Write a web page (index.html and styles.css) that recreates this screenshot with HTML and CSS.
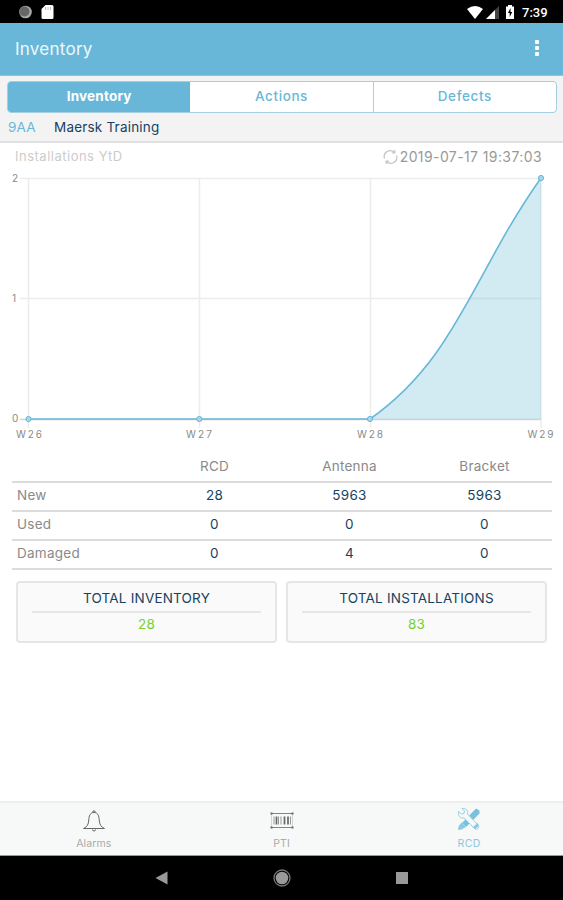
FILE: index.html
```html
<!DOCTYPE html>
<html lang="en">
<head>
    <meta charset="UTF-8">
    <meta name="viewport" content="width=device-width, initial-scale=1.0">
    <title>Inventory</title>
    <link rel="stylesheet" href="styles.css">
</head>
<body>
    <!-- Status bar -->
    <div class="status-bar">
        <svg class="status-left" width="40" height="18" viewBox="0 0 40 18">
            <circle cx="7.5" cy="9" r="6.3" fill="#aaa"/>
            <circle cx="6.5" cy="8.5" r="5" fill="#666"/>
            <path d="M27.5 2h6.5q1.5 0 1.5 1.5v11q0 1.5-1.5 1.5h-9q-1.5 0-1.5-1.5V6z" fill="#fff"/>
            <path d="M27.5 4v3M30 4v3M32.5 4v3" stroke="#bbb" stroke-width="1"/>
        </svg>
        <svg class="status-right" width="50" height="18" viewBox="0 0 50 18">
            <path d="M0 6Q8 0 16 6L8 16z" fill="#fff"/>
            <path d="M32 3v13H19z" fill="#444"/>
            <path d="M28 7v9h-9z" fill="#fff"/>
            <path d="M41 2h4v1.5h2V16h-8V3.5h2z" fill="#fff"/>
            <path d="M43.500 5l-2.500 5h1.700v4l2.500-5h-1.700z" fill="#000"/>
        </svg>
        <span class="clock">7:39</span>
    </div>

    <header class="app-bar">
        <h1>Inventory</h1>
        <div class="menu"><i></i><i></i><i></i></div>
    </header>

    <section class="top">
        <div class="tabs">
            <div class="tab active">Inventory</div>
            <div class="tab actions">Actions</div>
            <div class="tab">Defects</div>
        </div>
        <div class="location">
            <span class="code">9AA</span>
            <span class="name">Maersk Training</span>
        </div>
    </section>

    <main>
        <div class="chart-head">
            <span class="chart-title">Installations YtD</span>
            <span class="updated">
                <svg width="15" height="16" viewBox="0 0 15 16" fill="none" stroke="#c4c4c4" stroke-width="1.2">
                    <path d="M1.5 9.5A6 6 0 0 1 11.5 3.5M13.5 6.5A6 6 0 0 1 3.5 12.5M11.8 1v3h-3M3.2 15v-3h3"/>
                </svg>
                <span class="stamp">2019-07-17 19:37:03</span>
            </span>
        </div>

        <svg class="chart" width="563" height="275" viewBox="0 170 563 275">
            <g class="grid">
                <path d="M20 178.5H541M20 298.5H541M28.5 178V428M199.5 178V428M370.5 178V428M541 178V428"/>
                <path class="base" d="M20 419.5H541"/>
            </g>
            <path class="area" d="M370 419C456.6 358 472.6 274.4 541 178V419z"/>
            <path class="line" d="M28.5 419H370C456.6 358 472.6 274.4 541 178"/>
            <g class="dots">
                <circle cx="28.5" cy="419" r="2.6"/>
                <circle cx="199.3" cy="419" r="2.6"/>
                <circle cx="370" cy="419" r="2.6"/>
                <circle cx="541" cy="178" r="2.6"/>
            </g>
            <g class="axis">
                <text x="12" y="181.5">2</text>
                <text x="12" y="301.5">1</text>
                <text x="12" y="422">0</text>
                <text x="16" y="438" textLength="26">W26</text>
                <text x="186" y="438" textLength="26">W27</text>
                <text x="357" y="438" textLength="26">W28</text>
                <text x="527.5" y="438" textLength="26">W29</text>
            </g>
        </svg>

        <table class="stock">
            <tr><th></th><th>RCD</th><th>Antenna</th><th>Bracket</th></tr>
            <tr><td>New</td><td>28</td><td>5963</td><td>5963</td></tr>
            <tr><td>Used</td><td>0</td><td>0</td><td>0</td></tr>
            <tr><td>Damaged</td><td>0</td><td>4</td><td>0</td></tr>
        </table>

        <div class="totals">
            <div class="card">
                <div class="card-title">TOTAL INVENTORY</div>
                <div class="card-value">28</div>
            </div>
            <div class="card">
                <div class="card-title">TOTAL INSTALLATIONS</div>
                <div class="card-value">83</div>
            </div>
        </div>
    </main>

    <!-- Bottom tabs -->
    <nav class="bottom-nav">
        <div class="nav-item">
            <svg width="24" height="24" viewBox="0 0 24 24" fill="none" stroke="#666" stroke-width="1">
                <path d="M12 3.5C8 3.5 7 7 6.8 11C6.5 15.5 5 18 1.5 19.5H22.5C19 18 17.5 15.5 17.2 11C17 7 16 3.5 12 3.5z"/>
                <path d="M11 3.5v-1.5h2v1.5M10.5 20.5a1.5 1.5 0 0 0 3 0"/>
            </svg>
            <span>Alarms</span>
        </div>
        <div class="nav-item">
            <svg width="24" height="24" viewBox="0 0 24 24" fill="none" stroke="#666">
                <path d="M2 4.5H22M2 18.5H22" stroke-width=".8"/>
                <path d="M1.5 5v13M22.5 5v13" stroke="#bbb" stroke-width=".6"/>
                <path d="M4 7.5v8M8.5 7.5v8M11 7.5v8M20.5 7.5v8" stroke="#999"/>
                <path d="M6.5 7.5v8M14.5 7.5v8M18 7.5v8" stroke-width="1.7"/>
                <path d="M.5 3.5h2v2h-2zM21.5 3.5h2v2h-2zM.5 17.5h2v2h-2zM21.5 17.5h2v2h-2z" fill="#666" stroke="none"/>
            </svg>
            <span>PTI</span>
        </div>
        <div class="nav-item rcd">
            <svg width="24" height="24" viewBox="0 0 24 24">
                <path d="M19 1.5l3.5 2v3L9 20l-4-4z" fill="#7dc0dc"/>
                <path d="M4.5 15.5l4.5 4.500-4.500 2.500-3.500.5.7-4z" fill="#8ccae2"/>
                <path d="M1.5 4.5l3 2.5 2.5-.5.5-2.5-2.500-2.500c4-.5 6.500 2 5.500 5.500l10.500 11c2 2.500-1 5.500-3.500 3.500L7 11C3.500 12 .7 8.500 1.500 4.500z" fill="#f7f8f8" stroke="#8ccae2" stroke-width=".9"/>
                <path d="M15.500 20.500l5-4.500 1.500 2.500-3.500 3.500z" fill="#8ccae2"/>
            </svg>
            <span>RCD</span>
        </div>
    </nav>

    <div class="system-nav">
        <svg width="13" height="14" viewBox="0 0 13 14"><path d="M0.5 7L12.5 .5v13z" fill="#999"/></svg>
        <svg width="18" height="18" viewBox="0 0 18 18">
            <circle cx="9" cy="9" r="8" fill="none" stroke="#777" stroke-width="1.3"/>
            <circle cx="9" cy="9" r="6.3" fill="#999"/>
        </svg>
        <svg width="12" height="12" viewBox="0 0 12 12"><path d="M0 0h12v12H0z" fill="#999"/></svg>
    </div>
</body>
</html>
```

FILE: styles.css
```css
* {
    box-sizing: border-box;
}
body {
    margin: 0;
    height: 900px;
    display: flex;
    flex-direction: column;
    overflow: hidden;
    font-family: Inter, Roboto, sans-serif;
    background-color: #fff;
}
.status-bar {
    height: 23px;
    flex: none;
    display: flex;
    align-items: center;
    padding: 1px 15px 0 18px;
    background-color: #000;
    color: #fff;
}
.status-right {
    margin-left: auto;
    margin-right: 5px;
}
.clock {
    width: 26px;
    font-family: Roboto, sans-serif;
    font-size: 13px;
    font-weight: 500;
    white-space: nowrap;
}
.app-bar {
    height: 53px;
    flex: none;
    display: flex;
    align-items: center;
    justify-content: space-between;
    padding: 0 24px 0 15px;
    background-color: #69b7d8;
    border-bottom: 1px solid #8cc4dc;
    color: #fff;
}
h1 {
    margin: 0;
    font-size: 17px;
    font-weight: 400;
    letter-spacing: 0.25px;
    color: #eef8fc;
}
.menu {
    display: flex;
    flex-direction: column;
    gap: 2px;
    padding-bottom: 3px;
}
.menu i {
    width: 4px;
    height: 4px;
    border-radius: 1px;
    background-color: #fff;
}
.top {
    height: 67px;
    flex: none;
    padding: 5px 6px 0 7px;
    background-color: #f3f3f3;
    border-bottom: 2px solid #e0e0e0;
}
.tabs {
    height: 32px;
    display: flex;
    border: 1px solid #a4cee0;
    border-radius: 4px;
    overflow: hidden;
    background-color: #fff;
}
.tab {
    flex: 1;
    line-height: 29px;
    text-align: center;
    font-size: 13.5px;
    font-weight: 500;
    letter-spacing: 0.6px;
    color: #69b7d8;
}
.tab.active {
    background-color: #69b7d8;
    color: #fff;
    font-weight: 700;
    letter-spacing: 0.2px;
}
.tab.actions {
    border-right: 1px solid #a9d2e4;
}
.location {
    display: flex;
    padding-left: 1px;
    line-height: 28px;
    font-size: 13.5px;
    letter-spacing: 0.2px;
}
.code {
    width: 46px;
    color: #69b7d8;
}
.name {
    color: #17425f;
}
main {
    flex: 1;
}
.chart-head {
    height: 27px;
    display: flex;
    justify-content: space-between;
    align-items: center;
    padding: 0 21px 0 15px;
}
.chart-title {
    padding-bottom: 2px;
    font-size: 13px;
    letter-spacing: 0.5px;
    color: #ccc;
}
.updated {
    display: flex;
    align-items: center;
    gap: 2px;
    color: #999;
}
.stamp {
    font-size: 14px;
    letter-spacing: 0.4px;
}
.chart {
    display: block;
}
.grid path {
    fill: none;
    stroke: #ececec;
    stroke-width: 1.5;
}
.grid .base {
    stroke: #d2d2d2;
}
.area {
    fill: #6bb9d2;
    fill-opacity: 0.3;
}
.line {
    fill: none;
    stroke: #69b7d8;
    stroke-width: 1.6;
}
.dots circle {
    fill: #a9d6e9;
    stroke: #69b7d8;
}
.axis text {
    font-size: 10px;
    fill: #8a8a8a;
}
.stock {
    width: 540px;
    margin: 8px 0 0 12px;
    border-collapse: collapse;
    table-layout: fixed;
    font-size: 13.5px;
    letter-spacing: 0.25px;
}
.stock th, .stock td {
    height: 29px;
    padding: 0 0 2px;
    line-height: 20px;
    border-bottom: 2px solid #dcdcdc;
    text-align: center;
    color: #17425f;
}
.stock td {
    padding-bottom: 3px;
}
.stock th {
    font-weight: 400;
    color: #8a8a8a;
}
.stock td:first-child {
    padding-left: 5px;
    text-align: left;
    color: #8a8a8a;
}
.totals {
    display: flex;
    gap: 9px;
    padding: 11px 16px 0;
}
.card {
    flex: 1;
    height: 62px;
    padding: 4px 14px;
    border: 2px solid #e6e6e6;
    border-radius: 4px;
    background-color: #fafafa;
    text-align: center;
    font-size: 13.5px;
    letter-spacing: 0.2px;
}
.card-title {
    height: 26px;
    line-height: 22px;
    border-bottom: 2px solid #e6e6e6;
    color: #17425f;
}
.card-value {
    line-height: 22px;
    color: #75d12c;
}
.bottom-nav {
    height: 55px;
    flex: none;
    display: flex;
    background-color: #f7f8f8;
    border-top: 2px solid #eee;
    border-bottom: 1px solid #999;
}
.nav-item {
    flex: 1;
    display: flex;
    flex-direction: column;
    align-items: center;
    gap: 1px;
    padding-top: 6px;
    font-size: 10.5px;
    line-height: 20px;
    letter-spacing: 0.1px;
    color: #aaa;
}
.nav-item.rcd {
    color: #8bc8df;
    letter-spacing: 0.5px;
}
.nav-item.rcd svg {
    margin-top: -2px;
    margin-bottom: 2px;
}
.system-nav {
    height: 44px;
    flex: none;
    display: flex;
    align-items: center;
    justify-content: center;
    gap: 105px;
    background-color: #000;
}
```
